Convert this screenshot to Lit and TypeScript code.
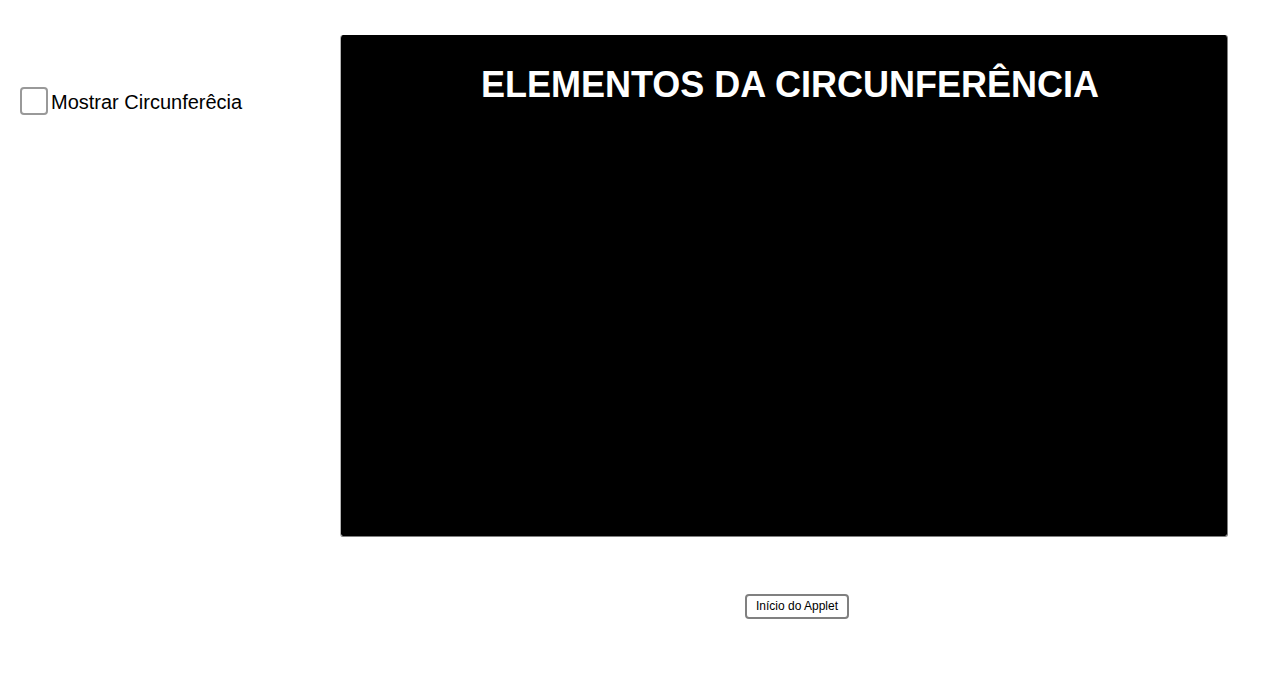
import { LitElement, css, html } from 'lit'
import { customElement, state } from 'lit/decorators.js'

@customElement('app-root')
export class AppRoot extends LitElement {
  @state()
  private showCircle = false

  render() {
    return html`
      <main class="applet">
        <label class="toggle">
          <input type="checkbox" .checked=${this.showCircle} @change=${this.onToggle} />
          <span>Mostrar Circunferêcia</span>
        </label>
        <section class="stage">
          <div class="board">
            <h1>ELEMENTOS DA CIRCUNFERÊNCIA</h1>
            ${this.showCircle ? this.circle() : ''}
          </div>
          <button type="button" @click=${this.reset}>Início do Applet</button>
        </section>
      </main>
    `
  }

  private circle() {
    return html`
      <svg viewBox="0 0 400 400" role="img" aria-label="Circunferência">
        <circle cx="200" cy="200" r="180" fill="none" stroke="#fff" stroke-width="3" />
        <circle cx="200" cy="200" r="4" fill="#fff" />
      </svg>
    `
  }

  private onToggle(event: Event) {
    this.showCircle = (event.target as HTMLInputElement).checked
  }

  private reset() {
    this.showCircle = false
  }

  static styles = css`
    :host {
      display: block;
      min-height: 100vh;
      background: #fff;
      color: #000;
      font-family: 'Liberation Sans', Arial, sans-serif;
    }

    .applet {
      display: grid;
      grid-template-columns: 320px 1fr;
      align-items: start;
      padding: 35px 52px 35px 20px;
    }

    .toggle {
      display: flex;
      align-items: center;
      gap: 3px;
      margin-top: 52px;
      font-size: 20px;
      line-height: 26px;
    }

    .toggle span {
      padding-top: 2px;
    }

    input {
      appearance: none;
      box-sizing: border-box;
      width: 28px;
      height: 28px;
      margin: 0;
      border: 2px solid #999;
      border-radius: 4px;
      background: #fff;
    }

    input:checked {
      background: #000;
      box-shadow: inset 0 0 0 5px #fff;
    }

    .stage {
      display: flex;
      flex-direction: column;
      align-items: center;
      gap: 57px;
    }

    .board {
      box-sizing: border-box;
      width: 100%;
      min-height: 502px;
      padding: 30px 0 20px 12px;
      border: 1px solid #808080;
      border-top: 0;
      border-left-color: #b3b3b3;
      border-radius: 3px;
      background: #000;
      background-clip: padding-box;
      color: #fff;
      text-align: center;
    }

    h1 {
      margin: 0;
      font-size: 36px;
      line-height: 40px;
    }

    svg {
      height: 380px;
    }

    button {
      box-sizing: border-box;
      height: 25px;
      margin-left: 26px;
      padding: 0 9px 2px;
      border: 2px solid #808080;
      border-radius: 4px;
      background: #fff;
      color: #000;
      font-family: inherit;
      font-size: 12px;
    }
  `
}
